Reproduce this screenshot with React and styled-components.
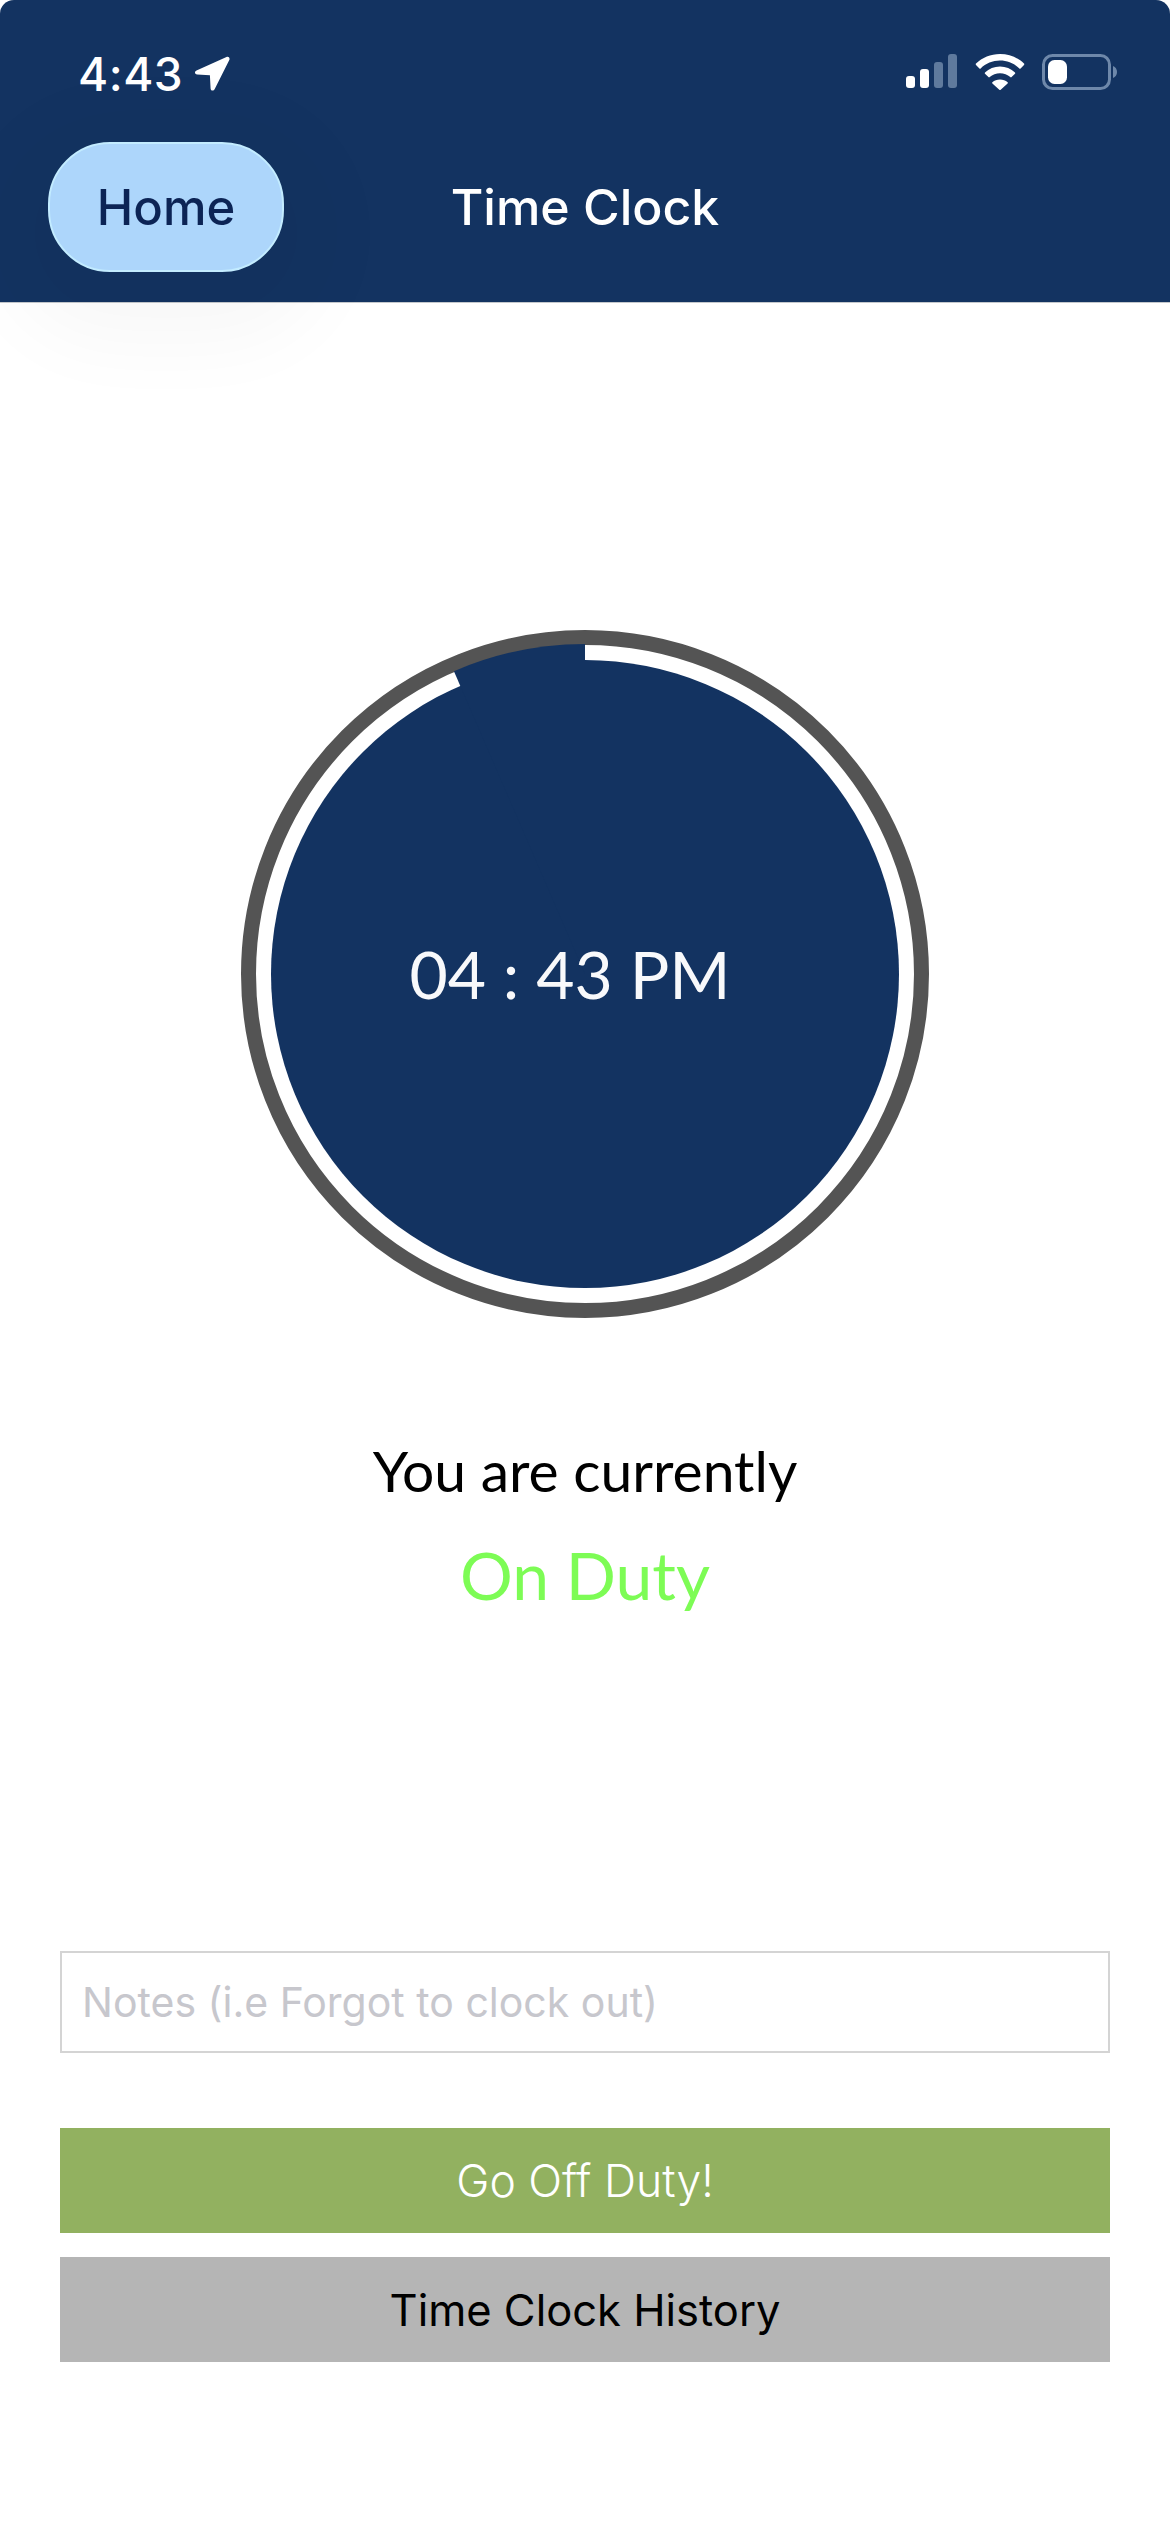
import styled, { createGlobalStyle } from "styled-components";

const Global = createGlobalStyle`
  html, body {
    margin: 0;
    padding: 0;
    background: #fff;
  }
  * {
    box-sizing: border-box;
  }
`;

const Screen = styled.div`
  width: 1170px;
  height: 2532px;
  display: flex;
  flex-direction: column;
  font-family: Inter, sans-serif;
`;

const Header = styled.header`
  height: 303px;
  background: #133361;
  border-radius: 14px 14px 0 0;
  border-bottom: 1px solid #c4c8cc;
  display: flex;
  flex-direction: column;
`;

const StatusBar = styled.div`
  height: 142px;
  padding: 49px 52px 0 78px;
  display: flex;
  justify-content: space-between;
  align-items: flex-start;
`;

const StatusTime = styled.div`
  display: flex;
  align-items: center;
  gap: 11px;
  color: #fff;
  font: 500 46px/50px Inter, sans-serif;
  letter-spacing: 0.5px;
`;

const StatusIcons = styled.div`
  display: flex;
  align-items: center;
  gap: 17px;
  padding-top: 5px;
`;

const NavBar = styled.nav`
  position: relative;
  height: 130px;
  padding-left: 48px;
  display: flex;
  align-items: center;
`;

const HomePill = styled.div`
  width: 236px;
  height: 130px;
  border-radius: 62px;
  background: #add6fb;
  border: 2px solid #c3ecff;
  box-shadow: 0 26px 80px 46px rgba(0, 0, 0, 0.03);
  display: flex;
  align-items: center;
  justify-content: center;
  color: #0c2455;
  font: 500 49px/1 Inter, sans-serif;
`;

const NavTitle = styled.div`
  position: absolute;
  inset: 0;
  display: flex;
  align-items: center;
  justify-content: center;
  color: #fff;
  font: 500 50px/1 Inter, sans-serif;
  pointer-events: none;
`;

const Main = styled.main`
  flex: 1;
  padding: 327px 60px 0;
  display: flex;
  flex-direction: column;
  align-items: center;
`;

const Dial = styled.div`
  position: relative;
  width: 688px;
  height: 688px;
  display: flex;
  align-items: center;
  justify-content: center;
  padding-right: 30px;
`;

const DialFace = styled.svg`
  position: absolute;
  inset: 0;
`;

const DialTime = styled.div`
  position: relative;
  color: #f8f9fb;
  font: 400 66px/1 Lato, sans-serif;
  white-space: nowrap;
`;

const Status = styled.div`
  margin-top: 117px;
  display: flex;
  flex-direction: column;
  align-items: center;
  font-family: Lato, sans-serif;
`;

const StatusLabel = styled.div`
  color: #000;
  font-size: 57px;
  line-height: 70px;
`;

const StatusValue = styled.div`
  margin-top: 32px;
  color: #7dfc55;
  font-size: 66px;
  line-height: 76px;
`;

const NotesInput = styled.input`
  width: 100%;
  height: 102px;
  margin-top: 338px;
  padding: 0 20px;
  border: 2px solid #d4d4d4;
  border-radius: 0;
  background: #fff;
  font: 400 41px Inter, sans-serif;
  outline: none;

  &::placeholder {
    color: #c7c7cd;
    opacity: 1;
  }
`;

const ActionButton = styled.button`
  width: 100%;
  height: 105px;
  margin-top: ${(props) => props.$top}px;
  border: none;
  border-radius: 0;
  background: ${(props) => props.$bg};
  color: ${(props) => props.$fg};
  font: ${(props) => props.$weight} ${(props) => props.$size}px Inter, sans-serif;
`;

function LocationArrow() {
  return (
    <svg width="36" height="36" viewBox="0 0 36 36">
      <path
        d="M32.500 1 2.500 14.500c-2.400 1.100-1.900 4 .7 4.100l12.700.6.7 13.200c.2 2.500 3 3 4 .8L35.300 4c.9-2-.8-3.800-2.800-3Z"
        fill="#fff"
      />
    </svg>
  );
}

function SignalBars() {
  return (
    <svg width="52" height="36" viewBox="0 0 52 36">
      <rect x="0" y="22" width="9" height="12" rx="3" fill="#fff" />
      <rect x="14" y="15" width="9" height="19" rx="3" fill="#fff" />
      <rect x="28" y="8" width="9" height="26" rx="3" fill="#5f7a9d" />
      <rect x="42" y="0" width="9" height="34" rx="3" fill="#5f7a9d" />
    </svg>
  );
}

function WifiIcon() {
  return (
    <svg width="50" height="36" viewBox="0 0 50 36">
      <path
        d="M25 0C15.600 0 7.200 3.600 1 9.600c-.4.4-.4.9 0 1.300l3.400 3.500c.4.4.9.4 1.300 0C10.800 9.500 17.600 6.600 25 6.600s14.200 2.900 19.300 7.800c.4.4.9.4 1.300 0l3.400-3.500c.4-.4.4-.9 0-1.300C42.800 3.600 34.400 0 25 0Z"
        fill="#fff"
      />
      <path
        d="M25 12.600c-5.800 0-11 2.200-15 5.800-.4.4-.4.9 0 1.300l3.400 3.400c.4.4.9.4 1.300 0 2.800-2.400 6.400-3.900 10.300-3.900s7.500 1.500 10.300 3.900c.4.4.9.4 1.300 0l3.400-3.400c.4-.4.4-.9 0-1.300-4-3.600-9.200-5.800-15-5.800Z"
        fill="#fff"
      />
      <path
        d="M25 25.400c-3 0-5.600 1-7.600 2.800-.4.400-.4.900 0 1.300l6.900 6.200c.4.400 1 .4 1.400 0l6.900-6.200c.4-.4.4-.9 0-1.300-2-1.800-4.600-2.800-7.600-2.800Z"
        fill="#fff"
      />
    </svg>
  );
}

function BatteryIcon() {
  return (
    <svg width="76" height="36" viewBox="0 0 76 36">
      <rect x="1.500" y="1.500" width="66" height="33" rx="9" fill="none" stroke="#6e88aa" strokeWidth="3" />
      <rect x="6" y="6" width="19" height="24" rx="6.500" fill="#fff" />
      <path d="M71 12c2.500.8 4 3.200 4 6s-1.500 5.200-4 6Z" fill="#6e88aa" />
    </svg>
  );
}

// The navy wedge bites into the white ring from 12 o'clock back to about 23 degrees
function ClockFace() {
  const cx = 344;
  const cy = 344;
  const angle = (-23.4 * Math.PI) / 180;
  const wedgeX = cx + 330 * Math.sin(angle);
  const wedgeY = cy - 330 * Math.cos(angle);
  return (
    <DialFace width="688" height="688" viewBox="0 0 688 688">
      <circle cx={cx} cy={cy} r="336.500" fill="#fff" stroke="#545454" strokeWidth="15" />
      <circle cx={cx} cy={cy} r="314" fill="#133361" />
      <path d={`M${cx} ${cy} L${cx} ${cy - 330} A330 330 0 0 0 ${wedgeX} ${wedgeY} Z`} fill="#133361" />
    </DialFace>
  );
}

export default function App() {
  return (
    <Screen>
      <Global />
      <Header>
        <StatusBar>
          <StatusTime>
            4:43
            <LocationArrow />
          </StatusTime>
          <StatusIcons>
            <SignalBars />
            <WifiIcon />
            <BatteryIcon />
          </StatusIcons>
        </StatusBar>
        <NavBar>
          <HomePill>Home</HomePill>
          <NavTitle>Time Clock</NavTitle>
        </NavBar>
      </Header>
      <Main>
        <Dial>
          <ClockFace />
          <DialTime>04 : 43 PM</DialTime>
        </Dial>
        <Status>
          <StatusLabel>You are currently</StatusLabel>
          <StatusValue>On Duty</StatusValue>
        </Status>
        <NotesInput placeholder="Notes (i.e Forgot to clock out)" />
        <ActionButton $top={75} $bg="#92b160" $fg="#fff" $weight={350} $size={44.5}>Go Off Duty!</ActionButton>
        <ActionButton $top={24} $bg="#b5b5b5" $fg="#000" $weight={400} $size={43.5}>Time Clock History</ActionButton>
      </Main>
    </Screen>
  );
}
